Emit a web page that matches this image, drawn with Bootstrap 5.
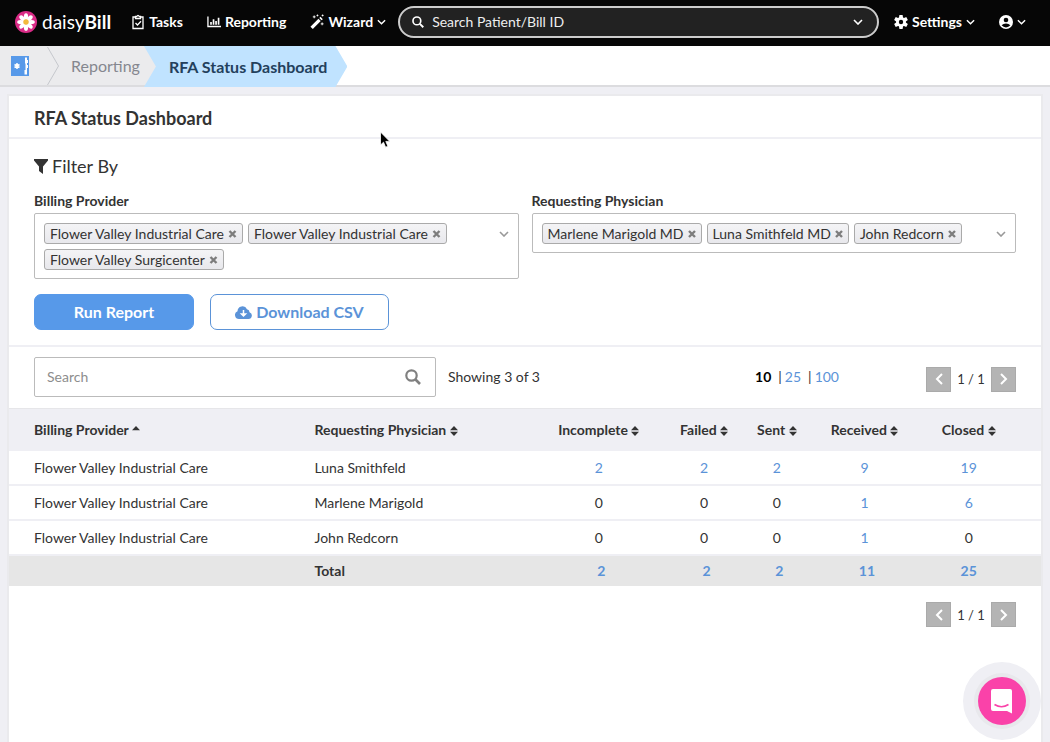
<!DOCTYPE html>
<html lang="en">
<head>
<meta charset="utf-8">
<meta name="viewport" content="width=device-width, initial-scale=1">
<title>RFA Status Dashboard</title>
<link href="https://cdn.jsdelivr.net/npm/bootstrap@5.3.0/dist/css/bootstrap.min.css" rel="stylesheet">
<style>
body { font-family: Lato, "Open Sans", sans-serif; font-size: 14px; line-height: 20px; color: #333; background: #efeff4; }
a { color: #5b93d8; text-decoration: none; }
svg { flex: none; }
.topbar { height: 46px; padding: 0 24px 2px 14px; background: #060606; color: #fff; font-weight: 700; }
.topbar a { color: #fff; }
.brand { margin-right: 20px; }
.brand-text { font-size: 19px; font-weight: 400; }
.brand-text b { font-weight: 700; }
.global-search { height: 32px; margin: 0 15px 0 12px; padding: 0 14px 0 12px; background: #222; border: 2px solid #ccc; border-radius: 16px; }
.global-search input, .global-search input::placeholder { color: #eee; opacity: 1; font-size: 14px; }
.crumbs { height: 41px; background: #fff; border-bottom: 2px solid #dcdcdf; font-size: 16px; }
.crumb-past { background: #ebebed; }
.crumb-past a { color: #85878f; }
.crumb-home { padding: 0 17px 0 10px; }
.crumb-end { background: linear-gradient(to right, #ebebed 20px, #fff 20px); }
.crumb-now { height: 41px; padding: 0 20px 0 25px; background: #c0e3ff; color: #23405c; font-weight: 700;
  clip-path: polygon(0 0, calc(100% - 12px) 0, 100% 50%, calc(100% - 12px) 100%, 0 100%, 12px 50%); }
.sheet { margin: 9px 9px 0; background: #fff; box-shadow: 0 0 0 2px #eaeaed; min-height: calc(100vh - 96px); }
.section-line { border-bottom: 2px solid #efeff4; }
.gutter { padding-left: 25px; padding-right: 25px; }
.sheet-head { padding-top: 12px; padding-bottom: 9px; }
.filter-zone { padding-top: 15px; padding-bottom: 15px; }
h1 { font-size: 18px; line-height: 20px; font-weight: 700; }
h2 { font-size: 18px; line-height: 24px; font-weight: 400; margin-bottom: 13px; }
.field-name { font-weight: 700; line-height: 20px; margin-bottom: 2px; }
.filters { column-gap: 13px; margin-bottom: 15px; }
.filters > div { flex: 1 1 0; }
.tag-box { border: 1px solid #bbb; border-radius: 2px; padding: 9px; padding-bottom: 8px; }
.tag-list { gap: 5px; }
.pick { height: 21px; padding: 0 5px; border: 1px solid #aaa; border-radius: 3px; background: linear-gradient(#f4f4f6, #e8e8ec); }
.pick button, .bare { border: 0; background: none; padding: 0; font: inherit; color: inherit; }
.action { height: 36px; border: 1px solid #5b93d8; border-radius: 7px; font-size: 16px; font-weight: 700; padding: 0; }
.run { width: 160px; background: #5799e9; border-color: #5799e9; color: #fff; }
.csv { width: 179px; color: #5b93d8; background: #fff; }
.list-tools { padding-top: 10px; padding-bottom: 11px; }
.finder { width: 402px; height: 40px; margin-right: 12px; border: 1px solid #bbb; border-radius: 2px; padding: 0 14px 0 12px; }
.finder input::placeholder { color: #8d8d8d; opacity: 1; }
.plain-input { border: 0; outline: 0; background: transparent; min-width: 0; padding: 0; }
.page-sizes { gap: 3px; margin-right: 87px; }
.pages { width: 40px; font-size: 13px; text-align: center; white-space: nowrap; }
.step { display: flex; align-items: center; justify-content: center; width: 25px; height: 25px; border: 1px solid #aaa; background: #b4b4b4; padding: 0; }
.grid-table { table-layout: fixed; width: 100%; border-collapse: separate; border-spacing: 0; }
.grid-table th, .grid-table td { text-align: center; padding: 0; white-space: nowrap; }
.grid-table .to-start { text-align: left; }
.grid-table tr > :first-child { padding-left: 25px; }
.grid-table tr > :last-child { padding-right: 32px; }
.grid-table th { height: 43px; background: #efeff4; border-top: 1px solid #e6e6e9; }
.grid-table tbody td { height: 35px; border-bottom: 2px solid #efeff4; }
.grid-table tfoot td { height: 30px; padding-bottom: 1px; background: #e6e6e6; font-weight: 700; }
.grid-table tfoot .sum { padding-left: 5px; }
.chat-halo { position: fixed; right: 9px; bottom: 2px; width: 78px; height: 78px; border-radius: 50%; background: #efeff4; }
.chat { width: 48px; height: 48px; border: 0; border-radius: 50%; background: #fa42a9; box-shadow: 0 0 0 4px #e8e8ec; padding: 0; }
.pointer { position: absolute; left: 379px; top: 131px; }
</style>
</head>
<body>
<svg width="0" height="0" class="position-absolute" aria-hidden="true">
  <symbol id="down" viewBox="0 0 10 6"><path d="M1 1l4 4 4-4" fill="none" stroke="currentColor" stroke-width="1.6"/></symbol>
  <symbol id="cross" viewBox="0 0 8 8"><path d="M1 1l6 6M7 1L1 7" stroke="#7d7d7d" stroke-width="2.4"/></symbol>
  <symbol id="sort" viewBox="0 0 8 10"><path d="M0 4.3L4 0l4 4.3zM0 5.7L4 10l4-4.3z" fill="#333"/></symbol>
  <symbol id="lens" viewBox="0 0 16 16"><circle cx="6.5" cy="6.5" r="5.2" fill="none" stroke="currentColor" stroke-width="2.2"/><path d="M10.5 10.5L15 15" stroke="currentColor" stroke-width="2.6"/></symbol>
  <symbol id="prev" viewBox="0 0 8 12"><path d="M7 1L2 6l5 5" fill="none" stroke="#fff" stroke-width="2"/></symbol>
  <symbol id="next" viewBox="0 0 8 12"><path d="M1 1l5 5-5 5" fill="none" stroke="#fff" stroke-width="2"/></symbol>
</svg>

<nav class="topbar d-flex align-items-center">
  <a href="#" class="brand d-flex align-items-center">
    <svg width="24" height="24" viewBox="0 0 24 24" class="me-1"><circle cx="12" cy="12" r="11" fill="#d92b86"/><g fill="#fff"><g id="petals"><ellipse cx="12" cy="6.600" rx="2.100" ry="3.400"/><ellipse cx="12" cy="17.400" rx="2.100" ry="3.400"/><ellipse cx="6.600" cy="12" rx="3.400" ry="2.100"/><ellipse cx="17.400" cy="12" rx="3.400" ry="2.100"/></g><use href="#petals" transform="rotate(45 12 12)"/></g><circle cx="12" cy="12" r="2.700" fill="#f3b93c"/></svg>
    <span class="brand-text">daisy<b>Bill</b></span>
  </a>
  <a href="#" class="d-flex align-items-center gap-1">
    <svg width="14" height="16" viewBox="1 0 14 16" fill="none" stroke="#fff" stroke-width="1.3"><path d="M5.500 3H3v11.500h10V3h-2.500M5.500 4.500v-2h1.300Q8 .2 9.200 2.500h1.300v2zM5.500 9l2 2 3.500-3.800"/></svg>Tasks</a>
  <a href="#" class="d-flex align-items-center gap-1 ms-4">
    <svg width="14" height="14" viewBox="0 0 15 14" fill="none" stroke="#fff"><path d="M1 1v10.800h14" stroke-width="1.400"/><path d="M4.300 7v3M7 4v6M9.700 6v4M12.400 2.500V10" stroke-width="1.800"/></svg>Reporting</a>
  <a href="#" class="d-flex align-items-center gap-1 ms-4">
    <svg width="14" height="16" viewBox="0 0 15 16"><path d="M.5 13L9 4.500l2.500 2.500L3 15.500z" fill="#fff"/><path d="M10 3.700l1.200-1.200L13.700 5l-1.300 1.200z" fill="#fff"/><path d="M4.500 1v3M3 2.500h3M8 0v2M7 1h2M13 8.500v3M11.500 10h3M13.500 0v2M12.500 1h2" stroke="#fff"/></svg>Wizard
    <svg width="9" height="6"><use href="#down"/></svg></a>
  <label class="global-search flex-grow-1 d-flex align-items-center">
    <svg width="12" height="12" class="me-2"><use href="#lens"/></svg>
    <input class="plain-input flex-grow-1" type="text" placeholder="Search Patient/Bill ID" aria-label="Search Patient/Bill ID">
    <svg width="10" height="6"><use href="#down"/></svg>
  </label>
  <a href="#" class="d-flex align-items-center gap-1">
    <svg width="14" height="14" viewBox="0 0 14 14"><g fill="#fff"><circle cx="7" cy="7" r="5"/><path id="tooth" d="M5.400 0h3.200l.5 3H4.900zM5.400 14h3.200l.5-3H4.900z"/><use href="#tooth" transform="rotate(60 7 7)"/><use href="#tooth" transform="rotate(120 7 7)"/></g><circle cx="7" cy="7" r="2.200" fill="#060606"/></svg>Settings
    <svg width="9" height="6"><use href="#down"/></svg></a>
  <a href="#" class="d-flex align-items-center gap-1 ms-4" aria-label="Account">
    <svg width="14" height="14" viewBox="0 0 14 14"><circle cx="7" cy="7" r="7" fill="#fff"/><circle cx="7" cy="5" r="2.300" fill="#060606"/><path d="M2.600 10.300Q4.300 8.500 7 8.500t4.400 1.800Q9.500 12.400 7 12.400t-4.400-2.100z" fill="#060606"/></svg>
    <svg width="9" height="6"><use href="#down"/></svg></a>
</nav>

<div class="crumbs d-flex">
  <div class="crumb-past d-flex align-items-center">
    <a href="#" class="crumb-home d-flex" aria-label="Home"><svg width="20" height="20" viewBox="0 0 20 20"><path d="M1 0h18v20H1z" fill="#5799e9"/><path d="M15 1.500h2V4h1v3h-1v2h1v3h-1v6.500h-2.500V14h1V7.500H15z" fill="#fff"/><path d="M7 7v6M4.500 8.500l5 3M9.500 8.500l-5 3" stroke="#fff" stroke-width="1.500"/></svg></a>
    <svg width="12" height="38" viewBox="0 0 12 38"><path d="M.5 0l11 19-11 19" fill="none" stroke="#c5c7cc"/></svg>
    <a href="#" class="ps-2 pe-1 ms-1">Reporting</a>
  </div>
  <div class="crumb-end"><div class="crumb-now d-flex align-items-center">RFA Status Dashboard</div></div>
</div>

<main class="sheet">
  <header class="sheet-head section-line gutter"><h1 class="m-0">RFA Status Dashboard</h1></header>

  <section class="filter-zone section-line gutter">
    <h2 class="d-flex align-items-center gap-1"><svg width="14" height="15" viewBox="0 0 14 15"><path d="M0 0h14v1.500L9 7.500V15l-4-3V7.500L0 1.500z" fill="#333"/></svg>Filter By</h2>
    <div class="filters d-flex align-items-start">
      <div>
        <div class="field-name" id="bp">Billing Provider</div>
        <div class="tag-box d-flex justify-content-between" role="group" aria-labelledby="bp">
          <div class="tag-list d-flex flex-wrap">
            <span class="pick d-flex align-items-center gap-1">Flower Valley Industrial Care<button type="button" aria-label="Remove" class="d-flex"><svg width="9" height="8"><use href="#cross"/></svg></button></span>
            <span class="pick d-flex align-items-center gap-1">Flower Valley Industrial Care<button type="button" aria-label="Remove" class="d-flex"><svg width="9" height="8"><use href="#cross"/></svg></button></span>
            <span class="pick d-flex align-items-center gap-1">Flower Valley Surgicenter<button type="button" aria-label="Remove" class="d-flex"><svg width="9" height="8"><use href="#cross"/></svg></button></span>
          </div>
          <button type="button" class="bare d-flex pt-2" aria-label="Open list"><svg width="10" height="6" color="#999"><use href="#down"/></svg></button>
        </div>
      </div>
      <div>
        <div class="field-name" id="rp">Requesting Physician</div>
        <div class="tag-box d-flex justify-content-between" role="group" aria-labelledby="rp">
          <div class="tag-list d-flex flex-wrap">
            <span class="pick d-flex align-items-center gap-1">Marlene Marigold MD<button type="button" aria-label="Remove" class="d-flex"><svg width="8" height="8"><use href="#cross"/></svg></button></span>
            <span class="pick d-flex align-items-center gap-1">Luna Smithfeld MD<button type="button" aria-label="Remove" class="d-flex"><svg width="8" height="8"><use href="#cross"/></svg></button></span>
            <span class="pick d-flex align-items-center gap-1">John Redcorn<button type="button" aria-label="Remove" class="d-flex"><svg width="8" height="8"><use href="#cross"/></svg></button></span>
          </div>
          <button type="button" class="bare d-flex pt-2" aria-label="Open list"><svg width="10" height="6" color="#999"><use href="#down"/></svg></button>
        </div>
      </div>
    </div>
    <div class="d-flex gap-3">
      <button type="button" class="btn action run">Run Report</button>
      <button type="button" class="btn action csv d-flex align-items-center justify-content-center gap-1"><svg width="17" height="13" viewBox="0 0 17 13"><path d="M4 13a4 4 0 01-1.500-7.700A5 5 0 0112 3.200a3 3 0 012.500 3A3.500 3.500 0 0113.500 13z" fill="#5b93d8"/><path d="M8.500 4v4M6.500 8h4l-2 2z" fill="#fff" stroke="#fff" stroke-width="1.500"/></svg>Download CSV</button>
    </div>
  </section>

  <section class="list-tools gutter d-flex align-items-center">
    <label class="finder d-flex align-items-center"><input type="search" class="plain-input flex-grow-1" placeholder="Search" aria-label="Search"><svg width="16" height="16" color="#808080"><use href="#lens"/></svg></label>
    <span>Showing 3 of 3</span>
    <div class="ms-auto d-flex align-items-center">
      <div class="page-sizes d-flex"><b class="text-black me-1">10</b><span>|</span><a href="#" class="me-1">25</a><span>|</span><a href="#">100</a></div>
      <div class="d-flex align-items-center pt-1"><button type="button" class="step" aria-label="Previous"><svg width="8" height="12"><use href="#prev"/></svg></button><span class="pages">1 / 1</span><button type="button" class="step" aria-label="Next"><svg width="8" height="12"><use href="#next"/></svg></button></div>
    </div>
  </section>

  <table class="grid-table">
    <colgroup><col style="width:29.6%"><col style="width:22.1%"><col style="width:10.9%"><col style="width:9.5%"><col style="width:4.6%"><col style="width:12.4%"><col></colgroup>
    <thead><tr>
      <th class="to-start"><button class="bare">Billing Provider <svg width="8" height="10" viewBox="0 0 8 10"><path d="M0 4.300L4 0l4 4.300z" fill="#333"/></svg></button></th>
      <th class="to-start"><button class="bare">Requesting Physician <svg width="8" height="10"><use href="#sort"/></svg></button></th>
      <th><button class="bare">Incomplete <svg width="8" height="10"><use href="#sort"/></svg></button></th>
      <th><button class="bare">Failed <svg width="8" height="10"><use href="#sort"/></svg></button></th>
      <th><button class="bare">Sent <svg width="8" height="10"><use href="#sort"/></svg></button></th>
      <th><button class="bare">Received <svg width="8" height="10"><use href="#sort"/></svg></button></th>
      <th><button class="bare">Closed <svg width="8" height="10"><use href="#sort"/></svg></button></th>
    </tr></thead>
    <tbody>
      <tr><td class="to-start">Flower Valley Industrial Care</td><td class="to-start">Luna Smithfeld</td><td><a href="#">2</a></td><td><a href="#">2</a></td><td><a href="#">2</a></td><td><a href="#">9</a></td><td><a href="#">19</a></td></tr>
      <tr><td class="to-start">Flower Valley Industrial Care</td><td class="to-start">Marlene Marigold</td><td>0</td><td>0</td><td>0</td><td><a href="#">1</a></td><td><a href="#">6</a></td></tr>
      <tr><td class="to-start">Flower Valley Industrial Care</td><td class="to-start">John Redcorn</td><td>0</td><td>0</td><td>0</td><td><a href="#">1</a></td><td>0</td></tr>
    </tbody>
    <tfoot><tr><td></td><td class="to-start">Total</td><td class="sum"><a href="#">2</a></td><td class="sum"><a href="#">2</a></td><td class="sum"><a href="#">2</a></td><td class="sum"><a href="#">11</a></td><td><a href="#">25</a></td></tr></tfoot>
  </table>

  <div class="gutter d-flex align-items-center justify-content-end pt-3"><button type="button" class="step" aria-label="Previous"><svg width="8" height="12"><use href="#prev"/></svg></button><span class="pages">1 / 1</span><button type="button" class="step" aria-label="Next"><svg width="8" height="12"><use href="#next"/></svg></button></div>
</main>

<div class="chat-halo d-flex align-items-center justify-content-center"><button type="button" class="chat" aria-label="Open chat"><svg width="22" height="25" viewBox="0 0 22 25"><path d="M2 0h17a2 2 0 012 2v22.500L16 22H2a2 2 0 01-2-2V2a2 2 0 012-2z" fill="#fff"/><path d="M3.500 15.500q7 4.500 14 0" fill="none" stroke="#fa42a9" stroke-width="1.500"/></svg></button></div>
<svg class="pointer" width="12" height="18" viewBox="0 0 12 18"><path d="M1.500 1v13l3-2.800 2.100 5 2.300-1-2.100-4.800h4z" fill="#000" stroke="#fff" stroke-width=".8"/></svg>
<script src="https://cdn.jsdelivr.net/npm/bootstrap@5.3.0/dist/js/bootstrap.bundle.min.js"></script>
</body>
</html>
